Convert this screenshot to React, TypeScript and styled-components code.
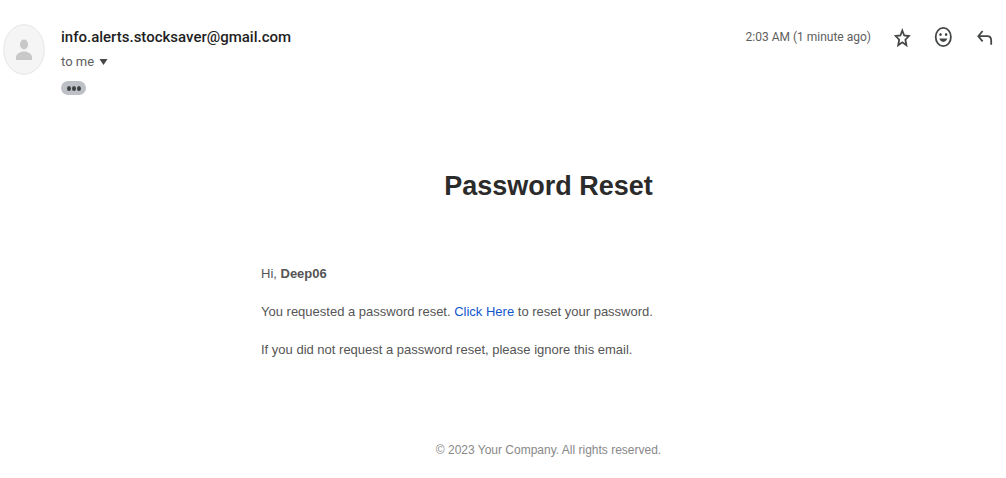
import React from "react";
import styled, { createGlobalStyle } from "styled-components";

const ui = `Roboto, "Liberation Sans", sans-serif`;
const mail = `"Liberation Sans", Arial, sans-serif`;

const GlobalStyle = createGlobalStyle`
  * { box-sizing: border-box; }
  body { margin: 0; background: #fff; font-family: ${ui}; }
`;

const Message = styled.article`
  padding: 24px 13px 16px 3px;
`;

const Header = styled.header`
  display: flex;
  align-items: flex-start;
`;

const Avatar = styled.svg`
  flex: none;
  width: 42px;
  height: 51px;
  margin-right: 16px;
`;

const Sender = styled.div`
  flex: 1;
  min-width: 0;
  display: flex;
  flex-direction: column;
  align-items: flex-start;
`;

const Address = styled.h3`
  margin: 0;
  font: 500 15px/26px ${ui};
  color: #1f1f1f;
`;

const Recipient = styled.button`
  display: flex;
  align-items: center;
  gap: 5px;
  padding: 0;
  border: 0;
  background: none;
  font: 13px/24px ${ui};
  color: #5e5e5e;
`;

const TrimmedToggle = styled.button`
  display: flex;
  align-items: center;
  justify-content: center;
  gap: 1px;
  width: 25px;
  height: 14px;
  margin-top: 7px;
  padding: 0;
  border: 0;
  border-radius: 7px;
  background: #bdc1c6;
`;

const Dot = styled.span`
  width: 4px;
  height: 5px;
  border-radius: 50%;
  background: #3c4043;
`;

const Meta = styled.div`
  display: flex;
  align-items: center;
  height: 26px;
`;

const Time = styled.time`
  margin-right: 22px;
  font: 12px/26px ${ui};
  color: #5e5e5e;
`;

const Actions = styled.div`
  display: flex;
  gap: 23px;
`;

const IconButton = styled.button`
  display: flex;
  padding: 0;
  border: 0;
  background: none;
  color: #444746;
`;

const Icon = styled.svg`
  width: 18px;
  height: 22px;
  fill: none;
  stroke: currentColor;
  stroke-width: 1.8;
`;

const Body = styled.section`
  margin-top: 69px;
  padding-left: 101px;
`;

const Title = styled.h1`
  margin: 0 0 54px;
  text-align: center;
  font: 700 27px/44px ${mail};
  color: #2b2b2b;
`;

const Copy = styled.div`
  max-width: 575px;
  margin: 0 auto;
`;

const Paragraph = styled.p`
  margin: 0 0 14px;
  font: 13px/24px ${mail};
  color: #555;
`;

const Link = styled.a`
  color: #15c;
  text-decoration: none;
`;

const Footer = styled.footer`
  margin-top: 76px;
  text-align: center;
  font: 12px/24px ${mail};
  color: #888;
`;

export default function App() {
  return (
    <>
      <GlobalStyle />
      <Message>
        <Header>
          <Avatar viewBox="0 0 42 51" role="img" aria-label="Sender">
            <ellipse cx="21" cy="25.5" rx="20.3" ry="24.8" fill="#f5f5f5" stroke="#e6e6e6" />
            <ellipse cx="21" cy="20.5" rx="4" ry="5" fill="#c8c8c8" />
            <path d="M13 36v-2.500c0-3.500 4-6 8-6s8 2.500 8 6V36z" fill="#c8c8c8" />
          </Avatar>
          <Sender>
            <Address>info.alerts.stocksaver@gmail.com</Address>
            <Recipient type="button">
              to me
              <svg width="9" height="6" viewBox="0 0 9 6" aria-hidden="true">
                <path d="M.5 0h8l-4 6z" fill="#444746" />
              </svg>
            </Recipient>
            <TrimmedToggle type="button" aria-label="Show trimmed content">
              <Dot />
              <Dot />
              <Dot />
            </TrimmedToggle>
          </Sender>
          <Meta>
            <Time>2:03 AM (1 minute ago)</Time>
            <Actions>
              <IconButton type="button" aria-label="Star">
                <Icon viewBox="0 0 18 22">
                  <path d="M9.300 4.500l1.900 5 4.700.5-3.500 3.700 1 5.500-4.100-2.900-4.100 2.900 1-5.500L2.700 10l4.700-.5z" />
                </Icon>
              </IconButton>
              <IconButton type="button" aria-label="Add reaction">
                <Icon viewBox="0 0 18 22">
                  <ellipse cx="9.3" cy="11" rx="7.6" ry="9.2" />
                  <g fill="currentColor" stroke="none">
                    <ellipse cx="6.5" cy="8.6" rx="1.2" ry="1.5" />
                    <ellipse cx="12.1" cy="8.6" rx="1.2" ry="1.5" />
                    <path d="M5.300 12.600h8c-.6 2-2.100 3.300-4 3.300s-3.400-1.300-4-3.300z" />
                  </g>
                </Icon>
              </IconButton>
              <IconButton type="button" aria-label="Reply">
                <Icon viewBox="0 0 18 22">
                  <path d="M7.600 5L3.300 10.200l4.300 5.200M3.300 10.200h9c2.400 0 3.900 1.900 3.900 4.500v4.100" />
                </Icon>
              </IconButton>
            </Actions>
          </Meta>
        </Header>
        <Body>
          <Title>Password Reset</Title>
          <Copy>
            <Paragraph>
              Hi, <b>Deep06</b>
            </Paragraph>
            <Paragraph>
              You requested a password reset. <Link href="#reset">Click Here</Link> to reset your password.
            </Paragraph>
            <Paragraph>If you did not request a password reset, please ignore this email.</Paragraph>
          </Copy>
          <Footer>© 2023 Your Company. All rights reserved.</Footer>
        </Body>
      </Message>
    </>
  );
}
